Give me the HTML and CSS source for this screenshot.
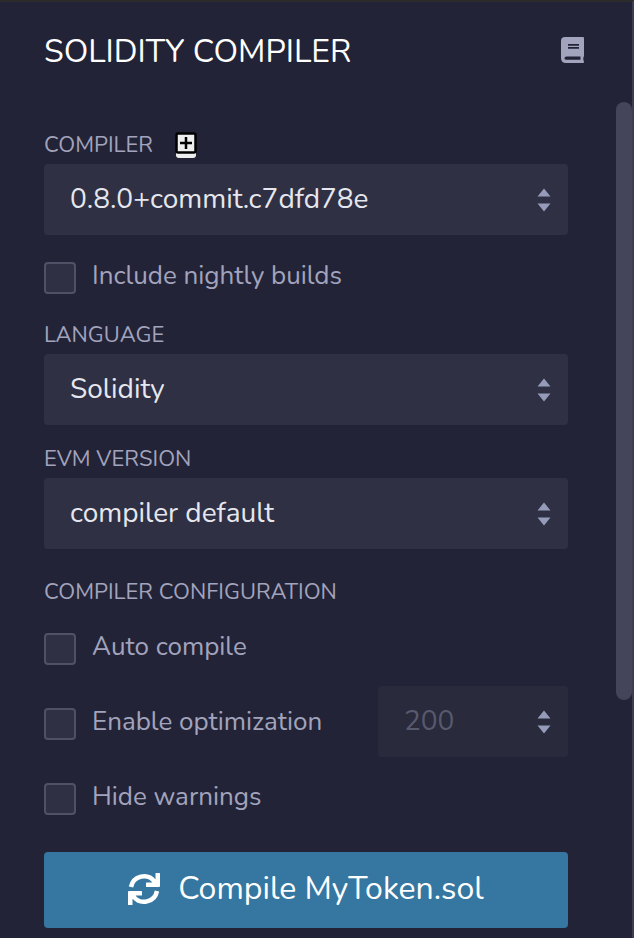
FILE: index.html
```html
<!DOCTYPE html>
<html lang="en">
<head>
<meta charset="utf-8">
<meta name="viewport" content="width=device-width, initial-scale=1">
<title>Solidity Compiler</title>
<link rel="stylesheet" href="styles.css">
</head>
<body>
<main class="panel">
  <header class="panel-header">
    <h1 class="title">SOLIDITY COMPILER</h1>
    <a class="docs" href="#docs" aria-label="Documentation">
      <svg width="23" height="26" viewBox="0 0 23 26" aria-hidden="true">
        <path fill="#a2a3bd" fill-rule="evenodd" d="M4 0H22Q23 0 23 1V18.500Q23 19.500 22.500 20Q22 21.700 22.500 23.500Q23 24 23 24.800Q23 26 22 26H5Q0 26 0 21V4Q0 0 4 0ZM7 7V8.700H18V7ZM7 10V11.700H18V10ZM5.500 19.600Q3.500 19.600 3.500 21.200Q3.500 22.800 5.500 22.800H19.500V19.600Z"/>
      </svg>
    </a>
  </header>
  <div class="panel-body">
    <form class="form">
      <div class="field">
        <div class="label-row">
          <label class="label" for="version">COMPILER</label>
          <button class="add" type="button" aria-label="Add custom compiler">
            <svg width="22" height="27" viewBox="0 0 22 27" aria-hidden="true">
              <rect x="1" y="12" width="20" height="14" rx="3" fill="#eee"/>
              <rect x="1.500" y="1.500" width="19" height="19" rx="1.500" fill="#eee" stroke="#000" stroke-width="2.500"/>
              <path d="M11 5V17M5 11H17" stroke="#000" stroke-width="2.500"/>
            </svg>
          </button>
        </div>
        <div class="control">
          <select class="input" id="version"><option>0.8.0+commit.c7dfd78e</option></select>
          <svg class="arrows" width="14" height="24" viewBox="0 0 14 24" aria-hidden="true"><path d="M7 0.500L13.500 8.500H0.500ZM0.500 15.500H13.500L7 23.500Z"/></svg>
        </div>
      </div>
      <label class="check nightly"><input class="box" type="checkbox"><span>Include nightly builds</span></label>
      <div class="field">
        <label class="label" for="language">LANGUAGE</label>
        <div class="control">
          <select class="input" id="language"><option>Solidity</option></select>
          <svg class="arrows" width="14" height="24" viewBox="0 0 14 24" aria-hidden="true"><path d="M7 0.500L13.500 8.500H0.500ZM0.500 15.500H13.500L7 23.500Z"/></svg>
        </div>
      </div>
      <div class="field evm">
        <label class="label" for="evm">EVM VERSION</label>
        <div class="control">
          <select class="input" id="evm"><option>compiler default</option></select>
          <svg class="arrows" width="14" height="24" viewBox="0 0 14 24" aria-hidden="true"><path d="M7 0.500L13.500 8.500H0.500ZM0.500 15.500H13.500L7 23.500Z"/></svg>
        </div>
      </div>
      <h2 class="label config">COMPILER CONFIGURATION</h2>
      <label class="check"><input class="box" type="checkbox"><span>Auto compile</span></label>
      <div class="optimize">
        <label class="check"><input class="box" type="checkbox"><span>Enable optimization</span></label>
        <div class="control runs">
          <input class="input" type="text" inputmode="numeric" value="200" aria-label="Optimization runs" disabled>
          <svg class="arrows" width="14" height="24" viewBox="0 0 14 24" aria-hidden="true"><path d="M7 0.500L13.500 8.500H0.500ZM0.500 15.500H13.500L7 23.500Z"/></svg>
        </div>
      </div>
      <label class="check"><input class="box" type="checkbox"><span>Hide warnings</span></label>
      <button class="compile" type="button">
        <svg width="32" height="32" viewBox="0 0 32 32" aria-hidden="true">
          <path d="M3 14A13.200 13.200 0 0 1 26.500 8.500M29 18A13.200 13.200 0 0 1 5.500 23.500" fill="none" stroke="#fff" stroke-width="4.500"/>
          <path d="M28 0H31.500Q32 0 32 .5V13Q32 14 31 14H18.500Q18 14 18 13.500V10Q18 9.500 18.500 9.500H24L27.500 6V.5Q27.500 0 28 0ZM4 32H.5Q0 32 0 31.500V19Q0 18 1 18H13.500Q14 18 14 18.500V22Q14 22.500 13.500 22.500H8L4.500 26V31.500Q4.500 32 4 32Z" fill="#fff"/>
        </svg>
        <span>Compile MyToken.sol</span>
      </button>
    </form>
    <div class="track"><div class="thumb"></div></div>
  </div>
</main>
</body>
</html>
```
FILE: styles.css
```css
* {
  box-sizing: border-box;
}

body {
  margin: 0;
  background: #222336;
  color: #a2a3bd;
  font-family: Nunito, "Noto Sans", sans-serif;
  font-size: 26px;
}

.panel {
  display: flex;
  flex-direction: column;
  min-height: 100vh;
  border-top: 2px solid #2b2b2b;
  border-right: 2px solid #3c3d53;
}

.panel-header {
  display: flex;
  align-items: center;
  justify-content: space-between;
  height: 98px;
  padding: 0 48px 0 44px;
}

.title {
  margin: 0;
  color: #fff;
  font-size: 32px;
  font-weight: 400;
}

.docs {
  display: flex;
  padding-bottom: 2px;
}

.panel-body {
  display: flex;
  flex: 1;
}

.form {
  flex: 1;
  min-width: 0;
  padding: 24px 48px 10px 44px;
}

.label-row {
  display: flex;
  align-items: center;
  gap: 22px;
}

.label {
  display: block;
  margin: 0;
  padding-top: 2px;
  font-size: 22px;
  font-weight: 400;
  line-height: 38px;
}

.add {
  display: flex;
  padding: 2px 0 0;
  border: 0;
  background: none;
}

.control {
  position: relative;
}

.input {
  display: block;
  width: 100%;
  height: 71px;
  padding: 0 50px 2px 26px;
  border: 0;
  border-radius: 4px;
  appearance: none;
  background: #2f3043;
  color: #e6e7ee;
  font: inherit;
  font-size: 28px;
}

.input:disabled {
  background: #292a3c;
  color: #58596d;
}

.arrows {
  position: absolute;
  top: 24px;
  right: 17px;
  fill: #959bb8;
  pointer-events: none;
}

.check {
  display: flex;
  align-items: center;
  gap: 16px;
  height: 75px;
}

.check span {
  padding-bottom: 5px;
}

.nightly {
  height: 79px;
  padding-top: 6px;
}

.box {
  flex: none;
  width: 32px;
  height: 32px;
  margin: 0;
  border: 2px solid #505167;
  border-radius: 4px;
  appearance: none;
  background: #2f3043;
}

.evm {
  margin-top: 13px;
}

.config {
  margin-top: 22px;
}

.optimize {
  display: flex;
  align-items: flex-start;
  justify-content: space-between;
}

.runs {
  width: 190px;
}

.compile {
  display: flex;
  align-items: center;
  justify-content: center;
  gap: 18px;
  width: 100%;
  height: 76px;
  margin-top: 16px;
  padding: 0 0 3px;
  border: 0;
  border-radius: 4px;
  background: #3577a1;
  color: #fff;
  font: inherit;
  font-size: 32px;
}

.track {
  width: 16px;
  padding-top: 2px;
}

.thumb {
  height: 598px;
  border-radius: 8px;
  background: #44455a;
}
```
